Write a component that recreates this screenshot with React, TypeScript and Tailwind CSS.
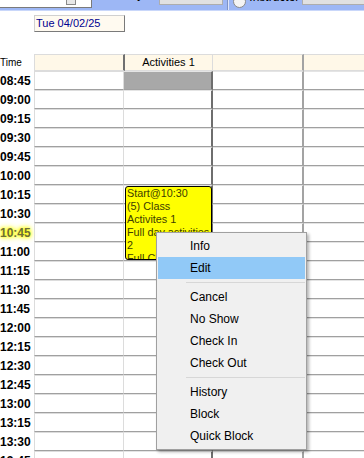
const times = [
  '08:45', '09:00', '09:15', '09:30', '09:45', '10:00', '10:15', '10:30', '10:45', '11:00', '11:15',
  '11:30', '11:45', '12:00', '12:15', '12:30', '12:45', '13:00', '13:15', '13:30', '13:45', '14:00',
];

export default function App() {
  return (
    <div className="relative h-[458px] w-[364px] overflow-hidden bg-white font-['Liberation_Sans',Arial,sans-serif] text-black">
      <Toolbar />

      <div className="pl-[34px] pt-[4px]">
        <button className="flex h-[17px] w-[91px] items-center border border-[#d0d0d0] border-b-[#7a7a7a] border-r-[#7a7a7a] bg-[#fffaf0] pl-px text-[11px] leading-none">
          <span className="text-[#000090]">Tue 04/02/25</span>
        </button>
      </div>

      <div className="mt-[22px]">
        <div className="flex h-[17px]">
          <div className="flex w-[34px] items-center text-[10px] leading-none">Time</div>
          <div className="w-[91px] border-y border-l border-[#dcdcdc] border-r-2 border-r-[#707070] bg-[#fff8e8]" />
          <div className="flex w-[88px] items-center justify-center border-y border-r border-[#dcdcdc] bg-[#fff8e8] text-[11px] leading-none">
            Activities 1
          </div>
          <div className="w-[91px] border-y border-[#dcdcdc] border-r-2 border-r-[#a3a3a3] bg-[#fff8e8]" />
          <div className="flex-1 border-y border-[#dcdcdc] bg-[#fff8e8]" />
        </div>

        {times.map((t, i) => (
          <div key={t} className="flex h-[19px]">
            <div className="flex w-[34px] items-center text-[12px] font-bold leading-none">
              {t === '10:45' ? (
                <span className="text-[#6e6e38] [text-shadow:0_0_3px_#ffff00,0_0_5px_#ffff00,0_0_6px_#ffff00]">{t}</span>
              ) : (
                t
              )}
            </div>
            <div className="w-[90px] border-x border-t border-[#dcdcdc] border-b border-b-[#a0a0a0]" />
            <div
              className={`w-[89px] border-t border-[#e4e4e4] border-b border-b-[#a0a0a0] border-r-2 border-r-[#6e6e6e] ${
                i === 0 ? 'bg-[#a8a8a8]' : ''
              }`}
            />
            <div className="w-[91px] border-t border-[#e4e4e4] border-b border-b-[#a0a0a0] border-r-2 border-r-[#a3a3a3]" />
            <div className="flex-1 border-t border-[#e4e4e4] border-b border-b-[#a0a0a0]" />
          </div>
        ))}
      </div>

      {/* booked slot */}
      <div className="absolute left-[125px] top-[186px] h-[74px] w-[87px] overflow-hidden rounded-[3px] border border-black bg-[#ffff00] pl-px text-[10.8px] leading-[13px] text-[#3d3d00]">
        <div>Start@10:30</div>
        <div>(5) Class</div>
        <div>Activites 1</div>
        <div>Full day activities 2</div>
        <div>Full Class</div>
      </div>

      <ContextMenu />
    </div>
  );
}

function Toolbar() {
  return (
    <div className="flex h-[11px] items-end overflow-hidden border-b border-[#c9d7fa] bg-[#9db7f5] text-[12px]">
      <div className="mb-[2px] flex h-[22px] w-[92px] flex-none items-end border-b border-r border-[#7a7a7a] bg-white pl-[4px]">
        <span className="mb-[7px] leading-[14px] text-[#1a3d8f]">04/02/2025</span>
        <div className="mb-[2px] ml-auto mr-[15px] h-[14px] w-[10px] border border-[#8a8a8a] bg-[#e8e8e8]" />
      </div>
      <span className="mb-[9px] ml-[30px] leading-[14px]">Day</span>
      <div className="mb-[5px] ml-[16px] flex h-[23px] w-[64px] flex-none items-end justify-center border border-[#adadad] bg-[#e1e1e1] leading-[16px]">
        Refresh
      </div>
      <div className="ml-[4px] flex h-full flex-none">
        <div className="w-px bg-[#7f93c4]" />
        <div className="w-px bg-[#dfe7fb]" />
      </div>
      <div className="mb-[2px] ml-[4px] h-[13px] w-[13px] flex-none rounded-full border border-[#8a8a8a] bg-[#f4f4f4]" />
      <span className="mb-[6px] ml-[3px] leading-[14px]">Instructor</span>
      <div className="mb-[5px] ml-[3px] flex h-[23px] w-[70px] flex-none items-end justify-center border border-[#adadad] bg-[#e1e1e1] leading-[16px]">
        Notes
      </div>
    </div>
  );
}

function ContextMenu() {
  const groups = [['Info', 'Edit'], ['Cancel', 'No Show', 'Check In', 'Check Out'], ['History', 'Block', 'Quick Block']];
  return (
    <div className="absolute left-[156px] top-[232px] w-[151px] border border-[#a0a0a0] bg-[#f0f0f0] px-px py-[2px] text-[12px] shadow-[2px_2px_3px_rgba(0,0,0,0.3)]">
      {groups.map((g, gi) => (
        <div key={gi}>
          {gi > 0 && <div className="my-[3px] ml-[28px] h-px bg-[#d7d7d7]" />}
          {g.map((item) => (
            <div key={item} className={`flex h-[22px] items-center pl-[32px] ${item === 'Edit' ? 'bg-[#91c9f7]' : ''}`}>
              {item}
            </div>
          ))}
        </div>
      ))}
    </div>
  );
}
